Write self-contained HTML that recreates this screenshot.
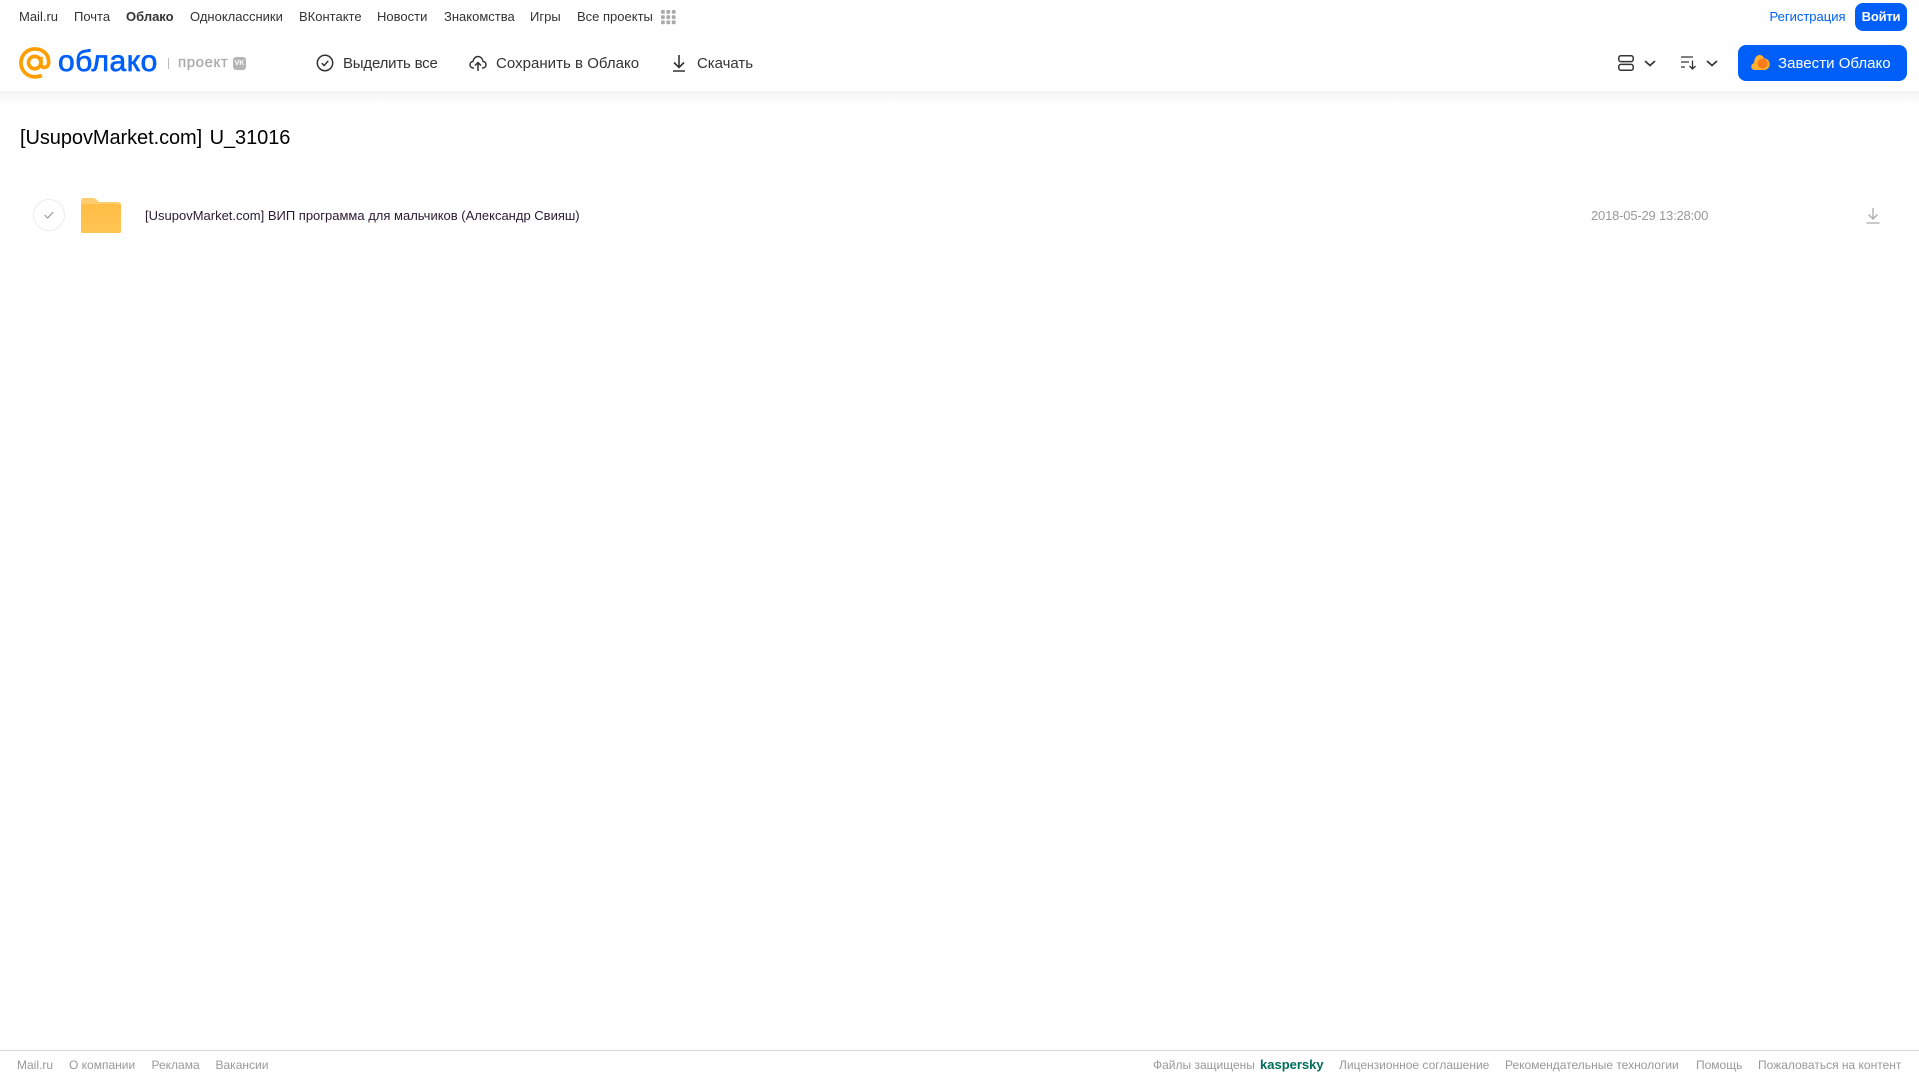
<!DOCTYPE html>
<html lang="ru"><head><meta charset="utf-8"><title>Облако</title>
<style>
html,body{margin:0;padding:0;background:#fff}
body{width:1919px;height:1079px;position:relative;overflow:hidden;font-family:"Liberation Sans",sans-serif}
.t{position:absolute;white-space:nowrap;line-height:20px}
.n{top:7px;font-size:13px;color:#333}
.b{top:53.500px;font-size:15px;color:#333}
.f{top:1055px;font-size:12px;color:#999}
svg{position:absolute;overflow:visible}
</style></head><body>
<div style="position:absolute;left:0;top:91px;width:1919px;height:14px;background:linear-gradient(#f3f3f3,#fff)"></div>
<span class="t n" style="left:19px">Mail.ru</span>
<span class="t n" style="left:74px">Почта</span>
<span class="t n" style="left:126px;font-weight:bold">Облако</span>
<span class="t n" style="left:190px">Одноклассники</span>
<span class="t n" style="left:299px">ВКонтакте</span>
<span class="t n" style="left:377px">Новости</span>
<span class="t n" style="left:444px">Знакомства</span>
<span class="t n" style="left:530px">Игры</span>
<span class="t n" style="left:577px">Все проекты</span>
<svg style="left:661px;top:10px" width="15" height="15" fill="#aaa"><rect width="3.800" height="3.800" rx="1"/><rect x="5.400" width="3.800" height="3.800" rx="1"/><rect x="10.800" width="3.800" height="3.800" rx="1"/><rect y="5.200" width="3.800" height="3.800" rx="1"/><rect x="5.400" y="5.200" width="3.800" height="3.800" rx="1"/><rect x="10.800" y="5.200" width="3.800" height="3.800" rx="1"/><rect y="10.400" width="3.800" height="3.800" rx="1"/><rect x="5.400" y="10.400" width="3.800" height="3.800" rx="1"/><rect x="10.800" y="10.400" width="3.800" height="3.800" rx="1"/></svg>
<span class="t n" style="left:1769.500px;color:#005ff9">Регистрация</span>
<div style="position:absolute;left:1855px;top:3px;width:52px;height:28px;border-radius:8px;background:#005ff9;color:#fff;font-size:13px;font-weight:bold;line-height:28px;text-align:center;letter-spacing:-.2px">Войти</div>

<svg style="left:19px;top:47px" width="32" height="32" viewBox="0 0 33 33" fill="none" stroke="#ff9e00" stroke-width="3.800"><circle cx="16.200" cy="16" r="6.400"/><path d="M22.600 10v7.500c0 5 7.800 5 8-1.500C31 7.500 24.500 2 16.200 2 8.500 2 2 8.300 2 16.200 2 24.500 8.500 30.800 16.500 30.800c2.700 0 5-.6 7-1.700"/></svg>
<span class="t" style="left:58px;top:43px;font-size:30px;line-height:38px;color:#005ff9;letter-spacing:.5px;-webkit-text-stroke:.7px #005ff9">облако</span>
<div style="position:absolute;left:168px;top:58px;width:1px;height:11px;background:#bbb"></div>
<span class="t" style="left:178px;top:53px;font-size:15px;color:#aaa;letter-spacing:.6px;-webkit-text-stroke:.3px #aaa">проект</span>
<div style="position:absolute;left:233px;top:57px;width:13px;height:13px;border-radius:3px;background:#b5b5b5;color:#fff;font-size:7px;font-weight:bold;line-height:13px;text-align:center">VK</div>

<svg style="left:316px;top:54px" width="18" height="18" viewBox="0 0 18 18" fill="none" stroke="#333" stroke-width="1.500"><circle cx="9" cy="9" r="7.700"/><path d="M5.800 9.200l2.300 2.300 4.200-4.600"/></svg>
<span class="t b" style="left:343px;letter-spacing:-.2px">Выделить все</span>
<svg style="left:469px;top:54px" width="18" height="18" viewBox="0 0 18 18" fill="none" stroke="#333" stroke-width="1.500"><path d="M5 14H4.500C2.500 14 1 12.600 1 10.700c0-1.700 1.200-3 2.900-3.200C4.400 4.600 6.500 2.500 9 2.500s4.600 2 5.100 5c1.700.2 2.900 1.500 2.900 3.200C17 12.600 15.500 14 13.500 14H13"/><path d="M9 17V9M6 11.500L9 8.500l3 3"/></svg>
<span class="t b" style="left:496px;letter-spacing:.03px">Сохранить в Облако</span>
<svg style="left:670px;top:54px" width="18" height="18" viewBox="0 0 18 18" fill="none" stroke="#333" stroke-width="1.600"><path d="M9 1v12M4 8.500l5 5 5-5M3 17h12"/></svg>
<span class="t b" style="left:697px;letter-spacing:-.04px">Скачать</span>

<svg style="left:1618px;top:55px" width="16" height="16" viewBox="0 0 16 16" fill="none" stroke="#333" stroke-width="1.500"><rect x=".8" y=".8" width="14.400" height="5.800" rx="2"/><rect x=".8" y="9.400" width="14.400" height="5.800" rx="2"/></svg>
<svg style="left:1644px;top:60px" width="12" height="7" fill="none" stroke="#333" stroke-width="1.700"><path d="M1 1l5 4.500L11 1"/></svg>
<svg style="left:1681px;top:56px" width="16" height="14" viewBox="0 0 16 14" fill="none" stroke="#333" stroke-width="1.300"><path d="M0 1h12M0 6h8M0 11h4M11.500 4.500V13M8.500 10l3 3 3-3"/></svg>
<svg style="left:1706px;top:60px" width="12" height="7" fill="none" stroke="#333" stroke-width="1.700"><path d="M1 1l5 4.500L11 1"/></svg>
<div style="position:absolute;left:1738px;top:45px;width:169px;height:36px;border-radius:8px;background:#005ff9"></div>
<svg style="left:1750.500px;top:54px" width="19" height="17" viewBox="0 0 19 17"><path d="M4 16C1.800 16 .3 14.400.3 12.500c0-1.700 1.200-3 2.700-3.400C3.300 5 5 1 8.500 1c2.500 0 4 1.500 4.700 3.500C16.300 4.300 18.700 7 18.700 10.300c0 3.300-2.500 5.700-5.700 5.700z" fill="#ffb02e"/><circle cx="11.500" cy="9.500" r="5" fill="#ff7a1a"/></svg>
<span class="t" style="left:1778px;top:53.500px;font-size:15px;color:#fff;letter-spacing:.03px">Завести Облако</span>

<span class="t" style="left:20px;top:126px;font-size:20px;line-height:24px;color:#000;letter-spacing:-.07px;word-spacing:2px">[UsupovMarket.com] U_31016</span>

<div style="position:absolute;left:33px;top:199px;width:32px;height:32px;border:1px solid #ebebeb;border-radius:50%;box-sizing:border-box"></div>
<svg style="left:44px;top:211px" width="10" height="8" fill="none" stroke="#999" stroke-width="1.200"><path d="M.7 4l3 3L9.300 1"/></svg>
<svg style="left:81px;top:197.500px" width="40" height="35" viewBox="0 0 40 35"><defs><linearGradient id="g" x1="0" y1="0" x2="0" y2="1"><stop offset="0" stop-color="#ffbd45"/><stop offset="1" stop-color="#ffc554"/></linearGradient></defs><path d="M0 3Q0 0 3 0h9q2 0 3.500 1.500L18 4h19q3 0 3 3V33q0 2-2 2H2q-2 0-2-2z" fill="#ffcd70"/><rect y="6" width="40" height="29" rx="2" fill="url(#g)"/></svg>
<span class="t" style="left:145px;top:206px;font-size:13px;color:#2b1a33">[UsupovMarket.com] ВИП программа для мальчиков (Александр Свияш)</span>
<span class="t" style="left:1591px;top:206px;font-size:13px;color:#999;letter-spacing:-.19px">2018-05-29 13:28:00</span>
<svg style="left:1866px;top:207px" width="14" height="17" viewBox="0 0 14 17" fill="none" stroke="#aaa" stroke-width="1.300"><path d="M7 1v11M2.500 7.500L7 12l4.500-4.500M.5 16h13"/></svg>

<div style="position:absolute;left:0;top:1050px;width:1919px;height:1px;background:#d8d8d8"></div>
<span class="t f" style="left:17px">Mail.ru</span>
<span class="t f" style="left:69px">О компании</span>
<span class="t f" style="left:151.500px">Реклама</span>
<span class="t f" style="left:215.500px">Вакансии</span>
<span class="t f" style="left:1153px">Файлы защищены</span>
<span class="t f" style="left:1260px;font-size:13px;font-weight:bold;color:#006d5c">kaspersky</span>
<span class="t f" style="left:1339px">Лицензионное соглашение</span>
<span class="t f" style="left:1505px">Рекомендательные технологии</span>
<span class="t f" style="left:1696px">Помощь</span>
<span class="t f" style="left:1758px">Пожаловаться на контент</span>
</body></html>
